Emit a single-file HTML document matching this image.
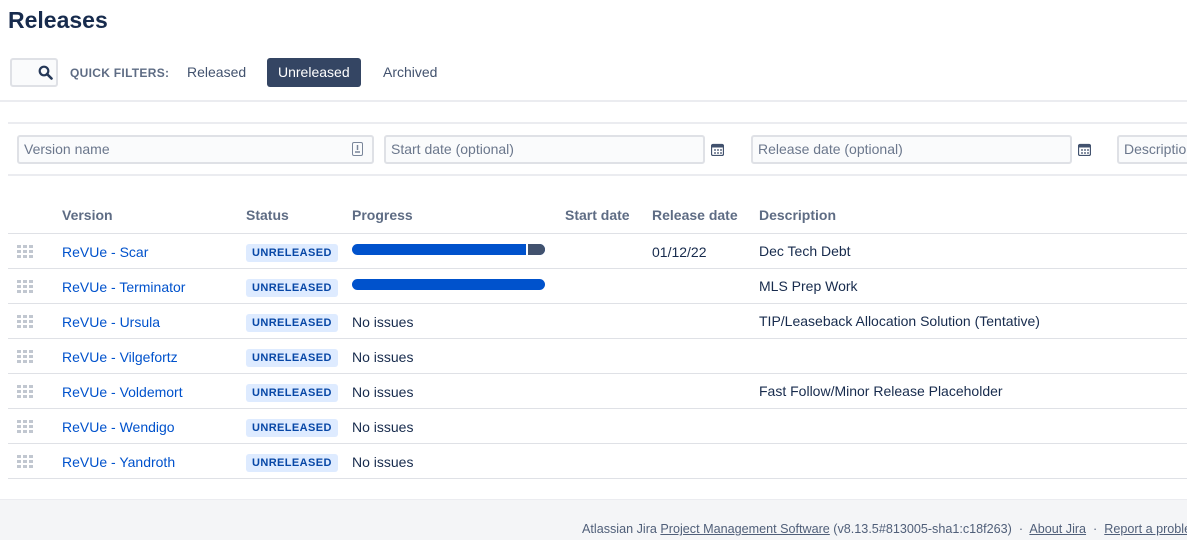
<!DOCTYPE html>
<html><head><style>
*{margin:0;padding:0;box-sizing:border-box}
body{width:1187px;height:540px;overflow:hidden;background:#fff;font-family:"Liberation Sans",sans-serif;color:#172b4d;position:relative;font-size:14px}
.a{position:absolute}
h1{position:absolute;left:8px;top:7px;font-size:23px;font-weight:bold;color:#172b4d}
.search{left:10px;top:58px;width:48px;height:29px;border:2px solid #dfe1e6;border-radius:3px;background:#fafbfc}
.qf{left:70px;top:66px;font-size:12px;font-weight:bold;color:#5e6c84;letter-spacing:.3px}
.btn{top:58px;height:29px;line-height:29px;font-size:14px;padding:0 11px;border-radius:3px;color:#42526e}
.hl{height:2px;background:#ebecf0}
.inp{top:135px;height:29px;border:2px solid #dfe1e6;border-radius:3px;background:#fafbfc;color:#6b778c;font-size:14px;line-height:25px;padding-left:5px}
.th{top:207px;font-size:14px;font-weight:bold;color:#5e6c84}
.row{left:8px;width:1179px;height:35px;border-bottom:1px solid #dfe1e6}
.row>*{position:absolute}
.grip{left:9px;top:11px}
.v{left:54px;top:10px;color:#0052cc;font-size:14px}
.lz{left:238px;top:10px;height:18px;line-height:18px;padding:0 6px;background:#deebff;color:#0747a6;font-size:11px;font-weight:bold;border-radius:3px;letter-spacing:.4px}
.p{left:344px;top:10px}
.d{left:751px;top:9px}
.bar{left:344px;top:10px;height:11px;width:193px;border-radius:6px;background:#0052cc;overflow:hidden}
</style></head><body>
<h1>Releases</h1>
<div class="a search"><svg class="a" style="left:26px;top:5px" width="15" height="15" viewBox="0 0 15 15"><circle cx="6" cy="6" r="4.3" fill="none" stroke="#253858" stroke-width="2.2"/><path d="M9 9l4.5 4.5" stroke="#253858" stroke-width="2.6" stroke-linecap="round"/></svg></div>
<div class="a qf">QUICK FILTERS:</div>
<div class="a btn" style="left:176px">Released</div>
<div class="a btn" style="left:267px;background:#344563;color:#fff">Unreleased</div>
<div class="a btn" style="left:372px">Archived</div>
<div class="a hl" style="left:0;top:100px;width:1187px"></div>
<div class="a hl" style="left:8px;top:122px;width:1179px"></div>
<div class="a inp" style="left:17px;width:357px">Version name<svg class="a" style="left:333px;top:5px" width="11" height="14"><rect x="0.5" y="0.5" width="10" height="13" rx="1.5" fill="none" stroke="#7a869a"/><path d="M5.5 3v5M3 10h5" stroke="#7a869a" stroke-width="1.5"/></svg></div>
<div class="a inp" style="left:384px;width:321px">Start date (optional)</div>
<svg class="a" style="left:711px;top:143px" width="13" height="13"><rect x="0.5" y="1.5" width="12" height="11" rx="1.5" fill="none" stroke="#42526e" stroke-width="1.3"/><rect x="0.5" y="1.5" width="12" height="3" fill="#42526e"/><path d="M3 7h2M6 7h2M9 7h2M3 10h2M6 10h2M9 10h2" stroke="#42526e" stroke-width="1.3"/></svg>
<div class="a inp" style="left:751px;width:321px">Release date (optional)</div>
<svg class="a" style="left:1078px;top:143px" width="13" height="13"><rect x="0.5" y="1.5" width="12" height="11" rx="1.5" fill="none" stroke="#42526e" stroke-width="1.3"/><rect x="0.5" y="1.5" width="12" height="3" fill="#42526e"/><path d="M3 7h2M6 7h2M9 7h2M3 10h2M6 10h2M9 10h2" stroke="#42526e" stroke-width="1.3"/></svg>
<div class="a inp" style="left:1117px;width:100px">Description</div>
<div class="a hl" style="left:8px;top:174px;width:1179px"></div>
<div class="a th" style="left:62px">Version</div>
<div class="a th" style="left:246px">Status</div>
<div class="a th" style="left:352px">Progress</div>
<div class="a th" style="left:565px">Start date</div>
<div class="a th" style="left:652px">Release date</div>
<div class="a th" style="left:759px">Description</div>
<div class="a" style="left:8px;top:233px;width:1179px;height:1px;background:#dfe1e6"></div>
<div id="rows" class="a" style="left:0;top:234px">
<div class="row a" style="top:0"><svg class="grip" width="16" height="14"><g fill="#c1c7d0"><rect x="0" y="0" width="4" height="3"/><rect x="6" y="0" width="4" height="3"/><rect x="12" y="0" width="4" height="3"/><rect x="0" y="5" width="4" height="3"/><rect x="6" y="5" width="4" height="3"/><rect x="12" y="5" width="4" height="3"/><rect x="0" y="10" width="4" height="3"/><rect x="6" y="10" width="4" height="3"/><rect x="12" y="10" width="4" height="3"/></g></svg><span class="v">ReVUe - Scar</span><span class="lz">UNRELEASED</span><div class="bar"><div style="position:absolute;left:174px;top:0;width:2px;height:11px;background:#fff"></div><div style="position:absolute;left:176px;top:0;width:20px;height:11px;background:#42526e"></div></div><span style="left:644px;top:10px">01/12/22</span><span class="d">Dec Tech Debt</span></div>
<div class="row a" style="top:35px"><svg class="grip" width="16" height="14"><g fill="#c1c7d0"><rect x="0" y="0" width="4" height="3"/><rect x="6" y="0" width="4" height="3"/><rect x="12" y="0" width="4" height="3"/><rect x="0" y="5" width="4" height="3"/><rect x="6" y="5" width="4" height="3"/><rect x="12" y="5" width="4" height="3"/><rect x="0" y="10" width="4" height="3"/><rect x="6" y="10" width="4" height="3"/><rect x="12" y="10" width="4" height="3"/></g></svg><span class="v">ReVUe - Terminator</span><span class="lz">UNRELEASED</span><div class="bar"></div><span class="d">MLS Prep Work</span></div>
<div class="row a" style="top:70px"><svg class="grip" width="16" height="14"><g fill="#c1c7d0"><rect x="0" y="0" width="4" height="3"/><rect x="6" y="0" width="4" height="3"/><rect x="12" y="0" width="4" height="3"/><rect x="0" y="5" width="4" height="3"/><rect x="6" y="5" width="4" height="3"/><rect x="12" y="5" width="4" height="3"/><rect x="0" y="10" width="4" height="3"/><rect x="6" y="10" width="4" height="3"/><rect x="12" y="10" width="4" height="3"/></g></svg><span class="v">ReVUe - Ursula</span><span class="lz">UNRELEASED</span><span class="p">No issues</span><span class="d">TIP/Leaseback Allocation Solution (Tentative)</span></div>
<div class="row a" style="top:105px"><svg class="grip" width="16" height="14"><g fill="#c1c7d0"><rect x="0" y="0" width="4" height="3"/><rect x="6" y="0" width="4" height="3"/><rect x="12" y="0" width="4" height="3"/><rect x="0" y="5" width="4" height="3"/><rect x="6" y="5" width="4" height="3"/><rect x="12" y="5" width="4" height="3"/><rect x="0" y="10" width="4" height="3"/><rect x="6" y="10" width="4" height="3"/><rect x="12" y="10" width="4" height="3"/></g></svg><span class="v">ReVUe - Vilgefortz</span><span class="lz">UNRELEASED</span><span class="p">No issues</span></div>
<div class="row a" style="top:140px"><svg class="grip" width="16" height="14"><g fill="#c1c7d0"><rect x="0" y="0" width="4" height="3"/><rect x="6" y="0" width="4" height="3"/><rect x="12" y="0" width="4" height="3"/><rect x="0" y="5" width="4" height="3"/><rect x="6" y="5" width="4" height="3"/><rect x="12" y="5" width="4" height="3"/><rect x="0" y="10" width="4" height="3"/><rect x="6" y="10" width="4" height="3"/><rect x="12" y="10" width="4" height="3"/></g></svg><span class="v">ReVUe - Voldemort</span><span class="lz">UNRELEASED</span><span class="p">No issues</span><span class="d">Fast Follow/Minor Release Placeholder</span></div>
<div class="row a" style="top:175px"><svg class="grip" width="16" height="14"><g fill="#c1c7d0"><rect x="0" y="0" width="4" height="3"/><rect x="6" y="0" width="4" height="3"/><rect x="12" y="0" width="4" height="3"/><rect x="0" y="5" width="4" height="3"/><rect x="6" y="5" width="4" height="3"/><rect x="12" y="5" width="4" height="3"/><rect x="0" y="10" width="4" height="3"/><rect x="6" y="10" width="4" height="3"/><rect x="12" y="10" width="4" height="3"/></g></svg><span class="v">ReVUe - Wendigo</span><span class="lz">UNRELEASED</span><span class="p">No issues</span></div>
<div class="row a" style="top:210px"><svg class="grip" width="16" height="14"><g fill="#c1c7d0"><rect x="0" y="0" width="4" height="3"/><rect x="6" y="0" width="4" height="3"/><rect x="12" y="0" width="4" height="3"/><rect x="0" y="5" width="4" height="3"/><rect x="6" y="5" width="4" height="3"/><rect x="12" y="5" width="4" height="3"/><rect x="0" y="10" width="4" height="3"/><rect x="6" y="10" width="4" height="3"/><rect x="12" y="10" width="4" height="3"/></g></svg><span class="v">ReVUe - Yandroth</span><span class="lz">UNRELEASED</span><span class="p">No issues</span></div>
</div>
<div class="a" style="left:0;top:499px;width:1187px;height:41px;background:#f4f5f7;border-top:1px solid #ebecf0"></div>
<div class="a" style="left:582px;top:522px;font-size:12.6px;color:#505f79;white-space:nowrap">Atlassian Jira <u>Project Management Software</u> (v8.13.5#813005-sha1:c18f263) &nbsp;·&nbsp; <u>About Jira</u> &nbsp;·&nbsp; <u>Report a problem</u></div>
</body></html>
